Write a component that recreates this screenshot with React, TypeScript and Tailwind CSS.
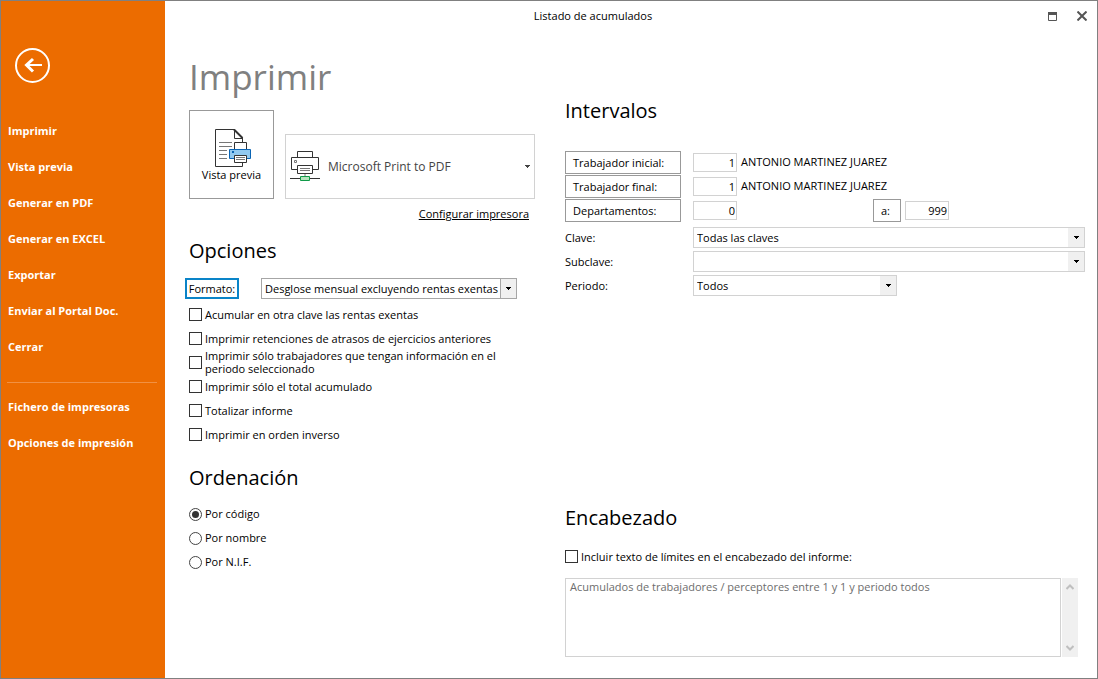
import { ReactNode, useState } from 'react';

const MAIN_ACTIONS = [
  'Imprimir',
  'Vista previa',
  'Generar en PDF',
  'Generar en EXCEL',
  'Exportar',
  'Enviar al Portal Doc.',
  'Cerrar',
];

const SETTINGS_ACTIONS = ['Fichero de impresoras', 'Opciones de impresión'];

const PRINT_OPTIONS = [
  'Acumular en otra clave las rentas exentas',
  'Imprimir retenciones de atrasos de ejercicios anteriores',
  'Imprimir sólo trabajadores que tengan información en el periodo seleccionado',
  'Imprimir sólo el total acumulado',
  'Totalizar informe',
  'Imprimir en orden inverso',
];

const SORT_OPTIONS = ['Por código', 'Por nombre', 'Por N.I.F.'];

function PreviewIcon() {
  return (
    <svg width="37" height="38" viewBox="0 0 37 38" fill="none" className="ml-1 mt-[3px]" aria-hidden="true">
      <path d="M0.5 0.5H19.5L27.5 8.5V37.5H0.5Z" fill="#fff" stroke="#333" />
      <path d="M19 0.5L27.5 9" stroke="#333" strokeWidth="2" />
      <path d="M19.5 0.5V9.5H27.5" stroke="#333" />
      <path d="M4 13.5H17M4 17.5H17M4 21.5H12M4 25.5H12M4 29.5H12" stroke="#777" />
      <path d="M19.5 13.5H31.5V20.5H19.5Z" fill="#fff" stroke="#333" />
      <path d="M14.5 20.5H35.5V29.5H14.5Z" fill="#91c9f0" stroke="#0a64b4" />
      <path d="M17 22H19V24H17Z" fill="#0a64b4" />
      <path d="M19.5 26.5H31.5V33.5H19.5Z" fill="#fff" stroke="#333" />
      <path d="M21 28.5H30M21 30.5H30" stroke="#777" />
    </svg>
  );
}

function PrinterIcon() {
  return (
    <svg width="30" height="31" viewBox="0 0 30 31" fill="none" className="shrink-0" aria-hidden="true">
      <path d="M7.5 0.5H22.5V6.5H7.5Z" fill="#fff" stroke="#333" />
      <path d="M1.5 6.5H28.5V18.5H1.5Z" fill="#fff" stroke="#333" />
      <path d="M4.5 9.5H6.5V11.5H4.5Z" stroke="#777" />
      <path d="M7.5 14.5H22.5V22.5H7.5Z" fill="#fff" stroke="#333" />
      <path d="M10 17.5H20M10 19.5H20" stroke="#777" />
      <path d="M15 23V25" stroke="#bbb" strokeWidth="2" />
      <path d="M0 27.5H30" stroke="#333" />
      <path d="M10.5 25.5H19.5V29.5H10.5Z" fill="#b5e3bd" stroke="#109a48" />
    </svg>
  );
}

function CaretIcon() {
  return (
    <svg width="5" height="3" viewBox="0 0 5 3" fill="currentColor" shapeRendering="crispEdges" aria-hidden="true">
      <path d="M0 0H5V1H4V2H3V3H2V2H1V1H0Z" />
    </svg>
  );
}

function SectionTitle({ children }: { children: ReactNode }) {
  return <h2 className="text-[20px] leading-8">{children}</h2>;
}

interface SelectBoxProps {
  id: string;
  options: string[];
  className?: string;
  dark?: boolean;
}

function SelectBox({ id, options, className = '', dark = false }: SelectBoxProps) {
  return (
    <div className={`relative h-[21px] border ${dark ? 'border-[#a6a6a6]' : 'border-[#d2d2d2]'} ${className}`}>
      <select id={id} className="h-full w-full appearance-none bg-white pl-[3px] pr-4 pt-px outline-none">
        {options.map((option) => (
          <option key={option}>{option}</option>
        ))}
      </select>
      <span
        className={`pointer-events-none absolute inset-y-0 right-0 flex w-4 items-center justify-center bg-[#f0f0f0] ${
          dark ? 'border-l border-[#a6a6a6]' : ''
        }`}
      >
        <CaretIcon />
      </span>
    </div>
  );
}

function CheckOption({ label }: { label: string }) {
  return (
    <label className="flex h-6 items-center gap-[3px] leading-[13px]">
      <input type="checkbox" className="h-[13px] w-[13px] shrink-0 appearance-none border border-[#333] bg-white checked:bg-[#333]" />
      {label}
    </label>
  );
}

function NumberBox({ label, initial }: { label: string; initial: string }) {
  return (
    <input
      aria-label={label}
      defaultValue={initial}
      className="h-[19px] w-11 border border-[#d2d2d2] pb-px pr-px text-right outline-none"
    />
  );
}

const fieldButton = 'h-[23px] border border-[#999] px-[7px] pt-px text-left';

export default function App() {
  const [order, setOrder] = useState(SORT_OPTIONS[0]);

  return (
    <div className="flex min-h-screen border border-[#808080] bg-white font-['Open_Sans','Noto_Sans',sans-serif] text-[11px] text-black">
      {/* Sidebar */}
      <aside className="w-[164px] shrink-0 bg-[#ec6c00] pt-[47px] font-bold text-white">
        <button type="button" aria-label="Volver" className="ml-[14px] block">
          <svg width="35" height="35" viewBox="0 0 35 35" fill="none" stroke="#fff" strokeWidth="2">
            <circle cx="17.5" cy="17.5" r="16.5" />
            <path d="M27 17H11" />
            <path d="M18 11L11.5 17L18 23.5" strokeWidth="3" />
          </svg>
        </button>
        <nav className="mt-[30px]">
          {MAIN_ACTIONS.map((action) => (
            <button key={action} type="button" className="block h-9 w-full pl-[7px] text-left">
              {action}
            </button>
          ))}
          <hr className="mb-[6px] ml-[6px] mr-2 mt-[17px] border-[#f19143]" />
          {SETTINGS_ACTIONS.map((action) => (
            <button key={action} type="button" className="block h-9 w-full pl-[7px] text-left">
              {action}
            </button>
          ))}
        </nav>
      </aside>

      <div className="flex min-w-0 flex-1 flex-col">
        {/* Title bar */}
        <header className="flex h-[30px] items-center">
          <span className="flex-1 text-center">Listado de acumulados</span>
          <div className="flex pl-4 text-[#555]">
            <button type="button" aria-label="Maximizar" className="flex h-6 w-[30px] items-center justify-center">
              <svg width="9" height="9" viewBox="0 0 9 9" fill="none" stroke="currentColor">
                <path d="M0.5 0.5H8.5V8.5H0.5Z" />
                <path d="M0 1.5H9" strokeWidth="3" />
              </svg>
            </button>
            <button type="button" aria-label="Cerrar ventana" className="flex h-6 w-[30px] items-center justify-center">
              <svg width="10" height="10" viewBox="0 0 10 10" fill="none" stroke="currentColor" strokeWidth="2">
                <path d="M0.5 0.5L9.5 9.5M9.5 0.5L0.5 9.5" />
              </svg>
            </button>
          </div>
        </header>

        <main className="flex flex-1 gap-[30px] pl-6 pr-3">
          {/* Left column */}
          <div className="w-[346px] shrink-0 pt-6">
            <h1 className="text-[35px] leading-[44px] text-[#808080]">Imprimir</h1>
            <div className="mt-[11px] flex items-end gap-[11px]">
              <button
                type="button"
                className="flex h-[89px] w-[85px] flex-col items-center justify-center border border-[#999]"
              >
                <PreviewIcon />
                <span className="leading-4">Vista previa</span>
              </button>
              <button
                type="button"
                className="flex h-[65px] flex-1 items-center gap-2 border border-[#d2d2d2] px-1 text-[#444]"
              >
                <PrinterIcon />
                <span className="flex-1 text-left text-[12px]">Microsoft Print to PDF</span>
                <CaretIcon />
              </button>
            </div>
            <div className="mt-[5px] pr-[6px] text-right leading-5">
              <a href="#configurar" className="underline">
                Configurar impresora
              </a>
            </div>

            <section className="mt-[11px]">
              <SectionTitle>Opciones</SectionTitle>
              <div className="mt-[11px] flex items-center">
                <label
                  htmlFor="formato"
                  className="-ml-1 flex h-[21px] w-[54px] items-center justify-center border-2 border-[#0a84c8] pt-px"
                >
                  Formato:
                </label>
                <SelectBox
                  id="formato"
                  options={['Desglose mensual excluyendo rentas exentas']}
                  className="ml-[22px] w-64"
                  dark
                />
              </div>
              <div className="mt-[3px] w-[320px]">
                {PRINT_OPTIONS.map((option) => (
                  <CheckOption key={option} label={option} />
                ))}
              </div>
            </section>

            <section className="mt-4">
              <SectionTitle>Ordenación</SectionTitle>
              <div className="mt-2">
                {SORT_OPTIONS.map((option) => (
                  <label key={option} className="flex h-6 items-center gap-[3px]">
                    <input
                      type="radio"
                      name="orden"
                      checked={order === option}
                      onChange={() => setOrder(option)}
                      className="h-[13px] w-[13px] appearance-none rounded-full border border-[#444] bg-white bg-clip-content p-[2px] checked:bg-[#333]"
                    />
                    {option}
                  </label>
                ))}
              </div>
            </section>
          </div>

          {/* Right column */}
          <div className="flex min-w-0 flex-1 flex-col pb-[21px] pt-16">
            <section>
              <SectionTitle>Intervalos</SectionTitle>
              <div className="mt-6 grid grid-cols-[116px_1fr] gap-x-3 gap-y-px">
                <button type="button" className={fieldButton}>Trabajador inicial:</button>
                <div className="flex items-center gap-1">
                  <NumberBox label="Trabajador inicial" initial="1" />
                  <span>ANTONIO MARTINEZ JUAREZ</span>
                </div>
                <button type="button" className={fieldButton}>Trabajador final:</button>
                <div className="flex items-center gap-1">
                  <NumberBox label="Trabajador final" initial="1" />
                  <span>ANTONIO MARTINEZ JUAREZ</span>
                </div>
                <button type="button" className={fieldButton}>Departamentos:</button>
                <div className="flex items-center gap-1">
                  <div className="w-44">
                    <NumberBox label="Departamento inicial" initial="0" />
                  </div>
                  <button type="button" className={`${fieldButton} w-7`}>a:</button>
                  <NumberBox label="Departamento final" initial="999" />
                </div>
              </div>
              <div className="mt-[5px] grid grid-cols-[116px_1fr] items-center gap-x-3 gap-y-[3px]">
                <label htmlFor="clave" className="pt-px">Clave:</label>
                <SelectBox id="clave" options={['Todas las claves']} />
                <label htmlFor="subclave" className="pt-px">Subclave:</label>
                <SelectBox id="subclave" options={['']} />
                <label htmlFor="periodo" className="pt-px">Periodo:</label>
                <SelectBox id="periodo" options={['Todos']} className="w-[204px]" />
              </div>
            </section>

            <section className="mt-auto pt-6">
              <SectionTitle>Encabezado</SectionTitle>
              <div className="mt-[10px]">
                <CheckOption label="Incluir texto de límites en el encabezado del informe:" />
              </div>
              <div className="mt-[10px] flex h-[79px] gap-px pr-[7px]">
                <textarea
                  aria-label="Texto del encabezado"
                  readOnly
                  value="Acumulados de trabajadores / perceptores entre 1 y 1 y periodo todos"
                  className="min-w-0 flex-1 resize-none border border-[#d2d2d2] px-1 text-[#6d6d6d] outline-none"
                />
                <div className="flex w-4 flex-col items-center justify-between bg-[#f0f0f0] py-[6px]">
                  <svg width="8" height="6" viewBox="0 0 8 6" fill="none" stroke="#bfbfbf" strokeWidth="2" aria-hidden="true">
                    <path d="M0.5 5L4 1.5L7.5 5" />
                  </svg>
                  <svg width="8" height="6" viewBox="0 0 8 6" fill="none" stroke="#bfbfbf" strokeWidth="2" aria-hidden="true">
                    <path d="M0.5 1L4 4.5L7.5 1" />
                  </svg>
                </div>
              </div>
            </section>
          </div>
        </main>
      </div>
    </div>
  );
}
